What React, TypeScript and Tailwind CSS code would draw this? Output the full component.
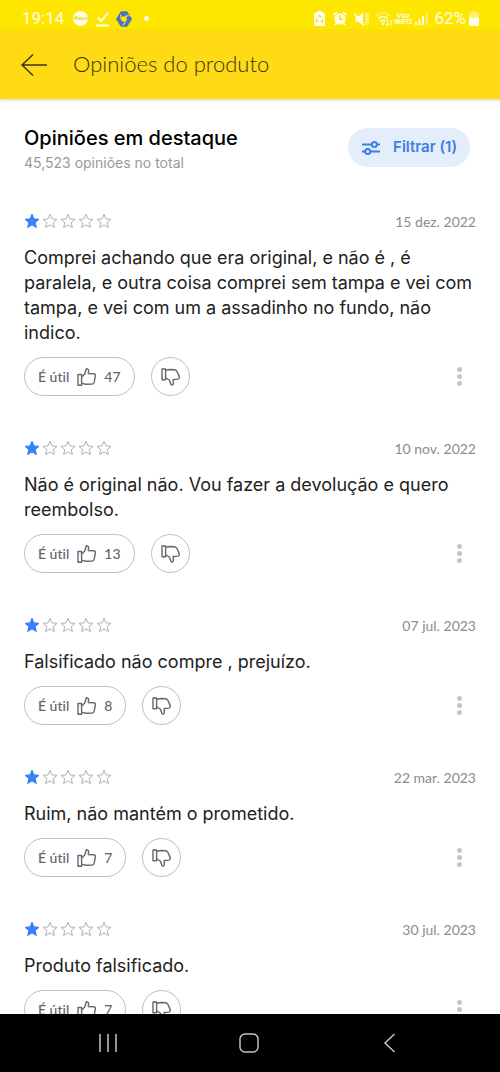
type Review = {
  date: string;
  text: string;
  likes: number;
};

const reviews: Review[] = [
  {
    date: '15 dez. 2022',
    text: 'Comprei achando que era original, e não é , é paralela, e outra coisa comprei sem tampa e vei com tampa, e vei com um a assadinho no fundo, não indico.',
    likes: 47,
  },
  {
    date: '10 nov. 2022',
    text: 'Não é original não. Vou fazer a devolução e quero reembolso.',
    likes: 13,
  },
  { date: '07 jul. 2023', text: 'Falsificado não compre , prejuízo.', likes: 8 },
  { date: '22 mar. 2023', text: 'Ruim, não mantém o prometido.', likes: 7 },
  { date: '30 jul. 2023', text: 'Produto falsificado.', likes: 7 },
];

function StatusBar() {
  return (
    <div className="flex h-[31px] shrink-0 items-center justify-between bg-[#ffe600] pt-[6px] pr-[21px] pl-[22px] font-['Roboto',sans-serif] text-[17px] text-[#fffde6]">
      <div className="flex items-center">
        <span>19:14</span>
        <span className="ml-[9px] flex size-[15px] items-center justify-center rounded-full bg-[#fffde6] text-[5px] font-bold text-[#e8d44a]">
          Wepoi
        </span>
        <svg className="ml-2 h-4 w-[13px]" viewBox="0 0 13 16" fill="none" stroke="currentColor" strokeWidth="2">
          <path d="M1.5 6.5 5 10l7-8M0 14.5h13" />
        </svg>
        <svg className="ml-[7px] size-4" viewBox="0 0 16 16">
          <path d="M5 .8h6L15.5 8 11 15.2H5L.5 8Z" fill="#4a74c9" stroke="#4a74c9" strokeLinejoin="round" />
          <circle cx="8" cy="8" r="2.8" fill="#ffe600" />
          <path d="M5.2 8.5 4.5 3.5M9 5.300 13.500 4.500M9.500 10.200 7 14.500" stroke="#ffe600" strokeWidth="1.2" />
        </svg>
        <span className="ml-3 size-[5px] rounded-full bg-[#fffde6]" />
      </div>

      <div className="flex items-center">
        <svg className="h-[15px] w-[11px]" viewBox="0 0 11 15">
          <path d="M3 1.5V0h5v1.5h1.5Q11 1.5 11 3v10.5Q11 15 9.5 15h-8Q0 15 0 13.5V3q0-1.5 1.5-1.5Z" fill="currentColor" />
          <path d="M4 6.5 5.5 4.2 7 6.5M8 8.5l1 2.2H6.5M4.5 10.7H2L3.2 8" fill="none" stroke="#ecd21a" />
        </svg>
        <svg className="ml-2 h-[15px] w-[14px]" viewBox="0 0 14 15">
          <circle cx="7" cy="8" r="5.6" fill="currentColor" />
          <path d="M.8 4 4 1.2M13.2 4 10 1.2M3.5 12 2 14M10.5 12l1.5 2" stroke="currentColor" strokeWidth="1.8" />
          <path d="M7 4.5V8.3h3" fill="none" stroke="#f2d90a" strokeWidth="1.3" />
        </svg>
        <svg className="ml-[7px] h-[14px] w-[15px]" viewBox="0 0 15 14">
          <path d="M1.5 4.5H4L9 .5v13L4 9.5H1.5Z" fill="currentColor" />
          <path d="M1 3l9 9.500" stroke="#ffe600" />
          <path d="M0 1.500 10 13" stroke="currentColor" strokeWidth="1.6" />
          <path d="M11.500 1l1 1.500-1 1.500 1 1.500-1 1.500 1 1.500-1 1.500 1 1.500-1 1.500M13.500 1l1 1.500-1 1.500 1 1.500-1 1.500 1 1.500-1 1.500 1 1.500-1 1.500" fill="none" stroke="currentColor" />
        </svg>
        <svg className="ml-[6px] h-4 w-[18px]" viewBox="0 0 18 16" fill="none" stroke="currentColor" strokeWidth="1.6">
          <path d="M.8 5.5Q8 -1.5 15.2 5.5" opacity=".5" />
          <path d="M3 8Q8 3 13 8M5.2 10.5Q8 8 10.8 10.5" />
          <circle cx="8" cy="12.5" r=".8" fill="currentColor" />
          <path d="M12.5 9v5.5M10.8 12.8l1.7 1.7 1.5-1.7M16 15V9.5M14.6 11 16 9.5 17.5 11" strokeWidth="1" />
        </svg>
        <span className="ml-[1px] flex flex-col items-center text-[8px] leading-[7px] font-bold">
          <span>Voz</span>
          <span className="text-[7px]">WIFI2</span>
        </span>
        <svg className="ml-[3px] h-[13px] w-[13px]" viewBox="0 0 13 13" fill="currentColor">
          <path d="M0 10h2v3H0ZM3.5 7h2v6h-2ZM7 4h2v9H7Z" />
          <path d="M10.8 0h2v13h-2Z" opacity=".5" />
        </svg>
        <span className="ml-[6px]">62%</span>
        <svg className="ml-[3px] h-[15px] w-[10px]" viewBox="0 0 10 15" fill="currentColor">
          <path d="M3 0h4v1.5h1.5Q10 1.5 10 3v3.5H0V3q0-1.5 1.5-1.5H3Z" opacity=".5" />
          <path d="M0 6.5h10v7q0 1.5-1.5 1.5h-7Q0 15 0 13.5Z" />
        </svg>
      </div>
    </div>
  );
}

function Stars() {
  return (
    <div className="flex gap-[2px]" role="img" aria-label="1 de 5 estrelas">
      {[1, 2, 3, 4, 5].map((n) => (
        <svg
          key={n}
          className={n === 1 ? 'size-4 text-[#3483fa]' : 'size-4 text-[#b0b0b0]'}
          viewBox="0 0 16 16"
          fill={n === 1 ? 'currentColor' : 'none'}
          stroke="currentColor"
        >
          <path d="M8 1.300 10 5.900l5 .4-3.800 3.300 1.200 4.900L8 11.900l-4.400 2.600 1.200-4.900L1 6.300l5-.4Z" />
        </svg>
      ))}
    </div>
  );
}

function ThumbUp() {
  return (
    <svg className="h-[18px] w-[19px]" viewBox="0 0 19 18" fill="none" stroke="currentColor" strokeWidth="1.4" strokeLinejoin="round">
      <path d="M1 6.500h3.600v10.700H1Z" />
      <path d="M4.600 9 7.600 6.200 9 1.700q.4-1.200 1.400-.9 1.400.5 1.200 2.100L11.200 5.500l5.600.3q1.700.2 1.600 1.900l-1.200 6.500q-.4 1.700-2 1.800l-6.400.2-4-.8" />
    </svg>
  );
}

function ThumbDown() {
  return (
    <svg className="h-[18px] w-[19px]" viewBox="0 0 19 18" fill="none" stroke="currentColor" strokeWidth="1.4" strokeLinejoin="round">
      <path d="M1 1h3.600v10.700H1Z" />
      <path d="M4.600 2.300 8.800 1.500l4.600.3q1.800.3 2.600 1.900 1.500 2.500 2.300 5.300.3 1.700-1.300 2.100l-4.800.4.2 3.600q0 1.700-1.100 2-1.100.1-1.500-1.100L8.300 12 4.600 9.800" />
    </svg>
  );
}

function ReviewItem({ review }: { review: Review }) {
  return (
    <article className="pb-[42px]">
      <div className="flex h-5 items-center justify-between">
        <Stars />
        <span className="font-['Lato',sans-serif] text-[14px] text-[#8c8c8c]">{review.date}</span>
      </div>
      <p className="mt-[14px] text-[18px] leading-[25px] text-[#222]">{review.text}</p>
      <div className="mt-3 flex items-center gap-4">
        <button className="flex h-[39px] items-center gap-2 rounded-full border border-[#bfbfbf] px-[13px] font-['Lato',sans-serif] text-[14px] font-medium text-[#666] [font-variant-ligatures:none]">
          <span>É útil</span>
          <ThumbUp />
          <span>{review.likes}</span>
        </button>
        <button
          aria-label="Não é útil"
          className="flex size-[39px] items-center justify-center rounded-full border border-[#bfbfbf] text-[#666]"
        >
          <ThumbDown />
        </button>
        <button aria-label="Mais opções" className="ml-auto flex w-[33px] flex-col items-center gap-[2px]">
          <span className="size-[5px] rounded-full bg-[#c6c6c6]" />
          <span className="size-[5px] rounded-full bg-[#c6c6c6]" />
          <span className="size-[5px] rounded-full bg-[#c6c6c6]" />
        </button>
      </div>
    </article>
  );
}

function NavBar() {
  return (
    <nav className="flex h-[58px] shrink-0 items-center justify-around bg-black pr-[40px] pl-[37px] text-[#c4c4c4]">
      <button aria-label="Recentes">
        <svg className="size-5" viewBox="0 0 20 20" stroke="currentColor" strokeWidth="1.5">
          <path d="M2 1v18M10 1v18M18 1v18" />
        </svg>
      </button>
      <button aria-label="Início">
        <svg className="size-5" viewBox="0 0 20 20" fill="none" stroke="currentColor" strokeWidth="1.5">
          <rect x="1" y="1" width="18" height="18" rx="5" />
        </svg>
      </button>
      <button aria-label="Voltar ao app anterior">
        <svg className="size-5" viewBox="0 0 20 20" fill="none" stroke="currentColor" strokeWidth="1.5">
          <path d="M14.500 1 5 10l9.500 9" />
        </svg>
      </button>
    </nav>
  );
}

export default function App() {
  return (
    <div className="flex h-screen flex-col bg-white font-['Inter',sans-serif]">
      <StatusBar />
      <header className="z-10 flex h-[68px] shrink-0 items-center gap-[26px] bg-[#ffdb15] px-[21px] text-[#3d3510] shadow-[0_1px_3px_rgba(0,0,0,0.2)]">
        <button aria-label="Voltar">
          <svg className="h-6 w-[26px]" viewBox="0 0 26 24" fill="none" stroke="currentColor" strokeWidth="1.5">
            <path d="M12 1.500 1 12l11 10.500M1 12h25" />
          </svg>
        </button>
        <h1 className="pb-1 font-['Lato',sans-serif] text-[22px] font-light">Opiniões do produto</h1>
      </header>

      <main className="min-h-0 flex-1 overflow-hidden px-6">
        <div className="flex items-start justify-between pt-[25px] pr-[6px]">
          <div>
            <h2 className="text-[20px] leading-[28px] font-medium text-black">Opiniões em destaque</h2>
            <p className="text-[14px] leading-[22px] text-[#999]">45,523 opiniões no total</p>
          </div>
          <button className="mt-1 flex h-[39px] items-center gap-3 rounded-full bg-[#e3edfb] px-[13px] text-[15px] font-semibold text-[#3d7ee0]">
            <svg className="h-4 w-5" viewBox="0 0 20 16" fill="none" stroke="currentColor" strokeWidth="2">
              <path d="M1 4.5h9.5M16 4.5h3M1 11.5h3M9.5 11.5H19" />
              <circle cx="13.3" cy="4.5" r="2.5" />
              <circle cx="6.7" cy="11.5" r="2.5" />
            </svg>
            <span>Filtrar (1)</span>
          </button>
        </div>

        <div className="mt-[37px]">
          {reviews.map((review) => (
            <ReviewItem key={review.date} review={review} />
          ))}
        </div>
      </main>

      <NavBar />
    </div>
  );
}
